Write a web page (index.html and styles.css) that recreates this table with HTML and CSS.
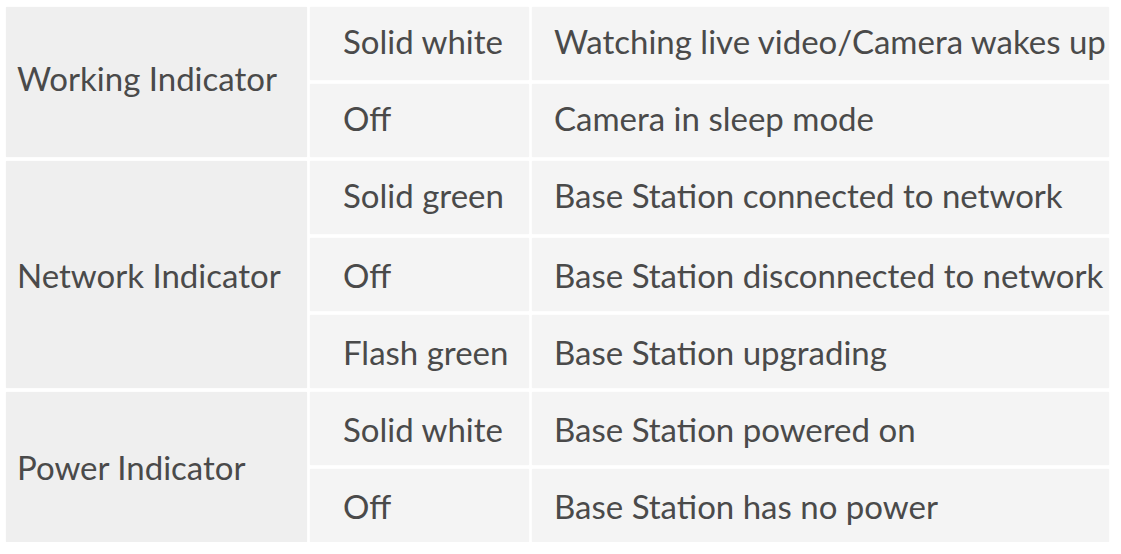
FILE: index.html
```html
<!DOCTYPE html>
<html lang="en">
<head>
<meta charset="utf-8">
<title>Indicators</title>
<link rel="stylesheet" href="styles.css">
</head>
<body>
<div class="table">
  <div class="cell name r1-2 up">Working Indicator</div>
  <div class="cell state up">Solid white</div>
  <div class="cell desc up">Watching live video/Camera wakes up</div>
  <div class="cell state up">Off</div>
  <div class="cell desc up">Camera in sleep mode</div>

  <div class="cell name r3-5">Network Indicator</div>
  <div class="cell state up">Solid green</div>
  <div class="cell desc up">Base Station connected to network</div>
  <div class="cell state">Off</div>
  <div class="cell desc">Base Station disconnected to network</div>
  <div class="cell state">Flash green</div>
  <div class="cell desc">Base Station upgrading</div>

  <div class="cell name r6-7">Power Indicator</div>
  <div class="cell state">Solid white</div>
  <div class="cell desc">Base Station powered on</div>
  <div class="cell state">Off</div>
  <div class="cell desc">Base Station has no power</div>
</div>
</body>
</html>
```
FILE: styles.css
```css
html, body {
  margin: 0;
  background: #ffffff;
}
body {
  padding: 7px 0 0 6px;
  font-family: Lato, "Noto Sans", sans-serif;
  color: #4a4a4a;
}
.table {
  display: grid;
  grid-template-columns: 301px 219px 577px;
  grid-auto-rows: 73px;
  column-gap: 3px;
  row-gap: 4px;
}
.cell {
  display: flex;
  align-items: center;
  background: #f4f4f4;
  font-size: 33px;
  white-space: nowrap;
  box-shadow: 0 0 2px rgba(0,0,0,0.03);
}
.up {
  padding-bottom: 6px;
}
.name {
  grid-column: 1;
  background: #efefef;
  padding-left: 11px;
}
.name.up {
  padding-bottom: 8px;
}
.r1-2 { grid-row: 1 / span 2; }
.r3-5 { grid-row: 3 / span 3; }
.r6-7 { grid-row: 6 / span 2; }
.state {
  grid-column: 2;
  padding-left: 33px;
}
.desc {
  grid-column: 3;
  padding-left: 22px;
}
```
